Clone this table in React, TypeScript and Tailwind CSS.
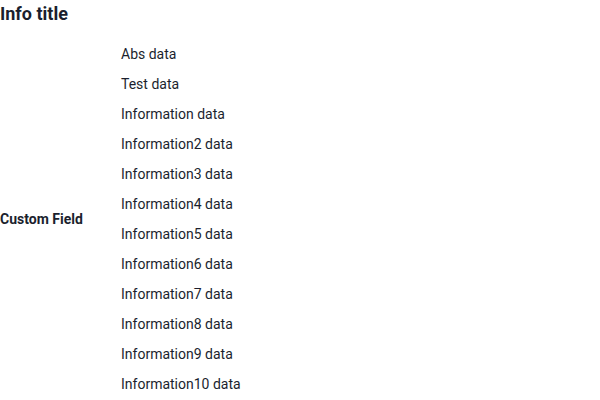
const rows = [
  'Abs data',
  'Test data',
  'Information data',
  'Information2 data',
  'Information3 data',
  'Information4 data',
  'Information5 data',
  'Information6 data',
  'Information7 data',
  'Information8 data',
  'Information9 data',
  'Information10 data',
];

export default function App() {
  return (
    <div className="w-[600px] h-[400px] bg-white text-[#1b1f2e] font-['Roboto',sans-serif] overflow-hidden">
      <h2 className="text-[18px] font-bold leading-[28px] h-[28px]">Info title</h2>
      <div className="flex mt-[11px]">
        {/* label column, centered against the values */}
        <div className="w-[121px] flex items-center text-[14px] font-bold">Custom Field</div>
        <div className="flex flex-col">
          {rows.map((r) => (
            <div key={r} className="h-[30px] flex items-center text-[14px]">
              {r}
            </div>
          ))}
        </div>
      </div>
    </div>
  );
}
